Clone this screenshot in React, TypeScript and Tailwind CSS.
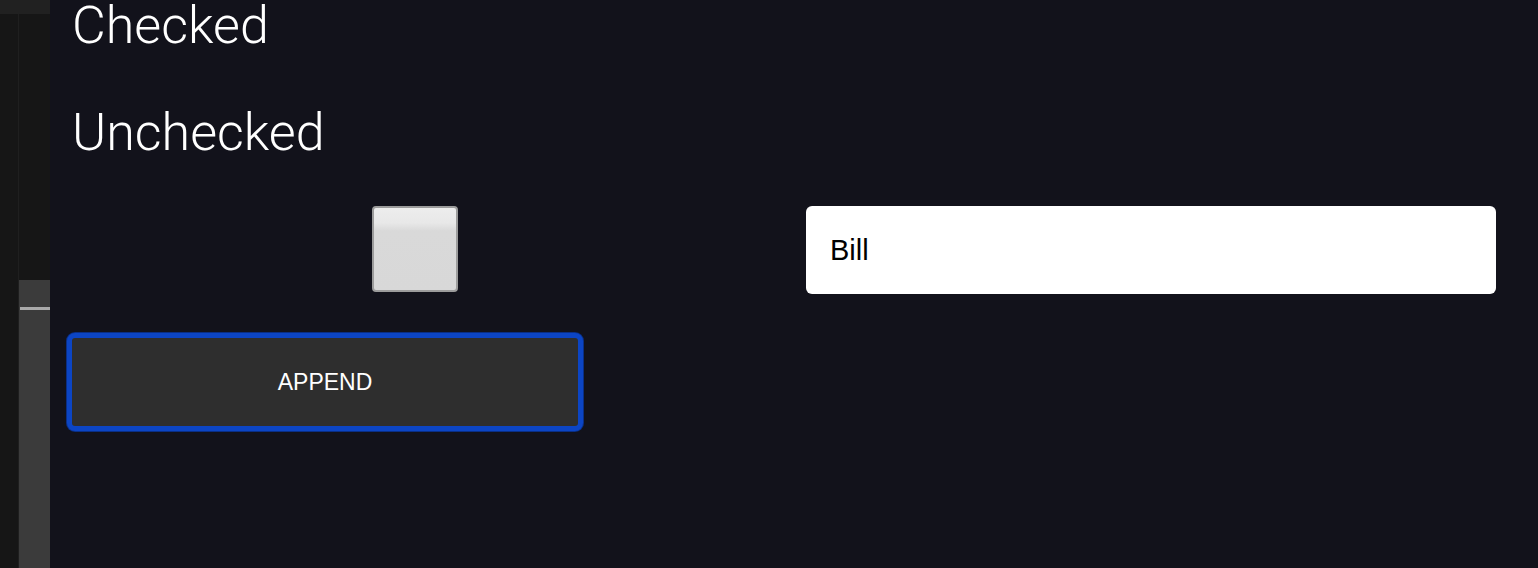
export default function App() {
  return (
    <div className="flex h-[568px] w-[1538px] overflow-hidden bg-[#12121b]">
      {/* editor side strip */}
      <div className="relative flex h-full w-[50px] shrink-0 bg-[#161616]">
        <div className="absolute left-0 top-0 h-[14px] w-[50px] bg-[#212121]" />
        <div className="ml-[18px] h-full w-px bg-[#1f1f1f]" />
        <div className="flex flex-1 flex-col pt-[280px]">
          <div className="relative flex-1 bg-[#3b3b3b]">
            <div className="absolute left-[1px] right-0 top-[27px] h-[3px] bg-[#a9a9a9]" />
          </div>
        </div>
      </div>

      {/* main */}
      <div className="flex flex-1 flex-col pl-[22px] pr-[42px] font-['Roboto',sans-serif] text-white">
        <h2 className="text-[52px] font-light leading-none">Checked</h2>
        <h2 className="mt-[55px] text-[52px] font-light leading-none">Unchecked</h2>

        <div className="mt-[47px] grid grid-cols-[686px_1fr] gap-x-[48px] gap-y-[38px]">
          <div className="flex justify-center">
            <button
              type="button"
              className="h-[86px] w-[86px] rounded-[4px] border-2 border-[#9c9c9c] bg-[linear-gradient(#ededed_0%,#e8e8e8_18%,#d9d9d9_28%,#d8d8d8_100%)]"
            />
          </div>
          <input
            defaultValue="Bill"
            className="h-[88px] w-full rounded-[6px] bg-white px-6 font-['Liberation_Sans',sans-serif] text-[29px] text-black outline-none"
          />

          <div className="-ml-[6px] w-[518px] rounded-[9px] bg-[#0a2f86] p-[1px]">
            <button
              type="button"
              className="flex h-[98px] w-full items-center justify-center rounded-[8px] border-[5px] border-[#0c45c4] bg-[#2e2e2e] font-['Liberation_Sans',sans-serif] text-[23px] text-white"
            >
              APPEND
            </button>
          </div>
        </div>
      </div>
    </div>
  );
}
